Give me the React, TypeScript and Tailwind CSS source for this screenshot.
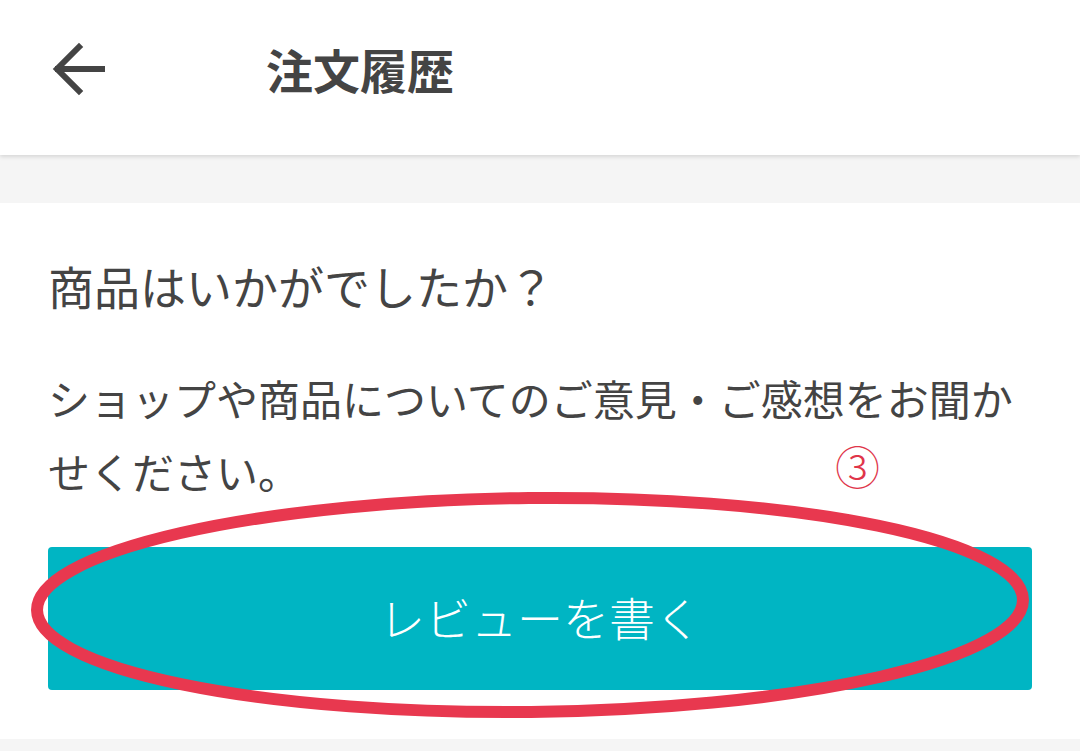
import React from "react";

const font = {
  fontFamily: '"Noto Sans CJK JP", "Noto Sans", sans-serif',
};

const Header = () => {
  return (
    <div className="relative z-10 flex h-[155px] items-center bg-white pb-[18px] shadow-[0_2px_4px_rgba(0,0,0,0.12)]">
      <div className="flex w-[266px] items-center pl-[52px]">
        <svg width="54" height="54" viewBox="0 0 54 54" fill="none">
          <path
            d="M50 27H6M27 5L5 27l22 22"
            stroke="#444"
            strokeWidth="6"
            strokeLinecap="square"
          />
        </svg>
      </div>
      <h1 className="text-[47px] font-bold leading-none text-[#444]">
        注文履歴
      </h1>
    </div>
  );
};

const ReviewCard = () => {
  return (
    <div className="relative bg-white px-[48px] pt-[48px] pb-[49px]">
      <h2 className="text-[46px] leading-[69px] text-[#444]">
        商品はいかがでしたか？
      </h2>
      <p className="mt-[41px] text-[42px] leading-[73px] text-[#444]">
        ショップや商品についてのご意見・ご感想をお聞かせください。
      </p>
      <button className="mt-[40px] flex h-[143px] w-full items-center justify-center rounded-[4px] bg-[#00b5c3] pb-[4px] text-[46px] font-light text-white">
        レビューを書く
      </button>

      {/* annotation overlay */}
      <span className="absolute left-[835px] top-[240px] text-[45px] font-light leading-none text-[#e0354a]">
        ③
      </span>
      <svg
        className="pointer-events-none absolute left-0 top-0"
        width="1080"
        height="540"
        viewBox="0 0 1080 540"
      >
        <ellipse
          cx="530"
          cy="402"
          rx="493"
          ry="107"
          fill="none"
          stroke="#e8384f"
          strokeWidth="12"
          transform="rotate(-0.6 530 402)"
        />
      </svg>
    </div>
  );
};

export default function App() {
  return (
    <div className="min-h-[751px] w-[1080px] bg-[#f5f5f5]" style={font}>
      <Header />
      <div className="h-[48px]" />
      <ReviewCard />
    </div>
  );
}
